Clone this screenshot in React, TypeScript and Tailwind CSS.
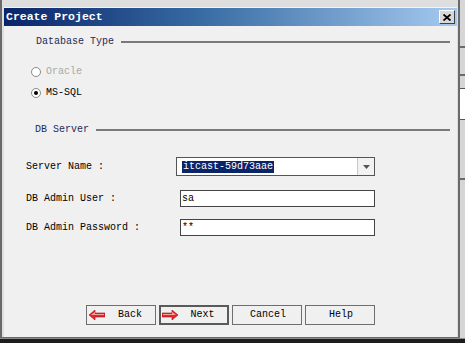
import React from 'react';

const mono = { fontFamily: '"Liberation Mono", "DejaVu Sans Mono", monospace' };

function Arrow({ dir }: { dir: 'left' | 'right' }) {
  return (
    <svg width="16" height="10" viewBox="0 0 16 10" className={dir === 'right' ? '-scale-x-100' : ''}>
      <polygon points="0,5 6,0 6,3 16,3 16,7 6,7 6,10" fill="#e8262b" stroke="#a01010" strokeWidth="0.6" />
      <polygon points="2,5 6,2 6,4 15,4 15,5" fill="#f7a0a0" />
    </svg>
  );
}

function GroupHeader({ label, className }: { label: string; className: string }) {
  return (
    <div className={`flex items-center h-[12px] mr-[7px] gap-[7px] ${className}`}>
      <span className="text-[10px] leading-none text-[#1f2a55]">{label}</span>
      <div className="flex-1 h-[2px] bg-[#7a7a7a]" />
    </div>
  );
}

function Radio({ label, checked, disabled }: { label: string; checked?: boolean; disabled?: boolean }) {
  return (
    <div className="flex items-center h-[14px] gap-[5px]">
      <div className="w-[10px] h-[10px] rounded-full border border-[#8a8a8a] bg-white flex items-center justify-center">
        {checked && <div className="w-[4px] h-[4px] rounded-full bg-black" />}
      </div>
      <span className={`text-[10px] leading-none ${disabled ? 'text-[#a8a8a8]' : 'text-black'}`}>{label}</span>
    </div>
  );
}

function Button({ label, icon, primary }: { label: string; icon?: 'left' | 'right'; primary?: boolean }) {
  return (
    <div
      className={`w-[70px] h-[20px] flex items-center bg-[#f0f0f0] ${
        primary ? 'border-2 border-[#5a5a5a] pl-[1px]' : 'border border-[#6e6e6e] pl-[2px]'
      }`}
    >
      {icon && <Arrow dir={icon} />}
      <span className="flex-1 text-center text-[10px] leading-none text-black">{label}</span>
    </div>
  );
}

export default function App() {
  return (
    <div className="w-[465px] h-[343px] bg-[#1c1c1c] flex flex-col overflow-hidden" style={mono}>
      <div className="flex h-[338px]">
        {/* dialog frame */}
        <div className="w-[460px] h-full flex flex-col bg-[#dedede] border-l-2 border-[#6a6a6a] pl-[2px] pt-[7px] border-r-2 pr-[1px] border-b">
          <div className="h-[1px] bg-[#f4f4f4]" />
          {/* title bar */}
          <div className="h-[18px] flex items-center justify-between bg-[linear-gradient(to_right,#0a246a,#3a6ea5_45%,#a6caf0)] pl-[2px] pr-[2px]">
            <span className="text-white font-bold text-[11.5px] leading-none">Create Project</span>
            <div className="w-[16px] h-[14px] bg-[#d8d8d8] border border-t-white border-l-white border-r-[#404040] border-b-[#404040] flex items-center justify-center">
              <svg width="8" height="7" viewBox="0 0 8 7">
                <path d="M0.5 0.5 L7.5 6.5 M7.5 0.5 L0.5 6.5" stroke="#000" strokeWidth="1.8" />
              </svg>
            </div>
          </div>

          {/* body */}
          <div className="flex-1 flex flex-col bg-[#f0f0f0]">
            <GroupHeader label="Database Type" className="mt-[10px] ml-[32px]" />

            <div className="ml-[27px] mt-[17px] flex flex-col gap-[7px]">
              <Radio label="Oracle" disabled />
              <Radio label="MS-SQL" checked />
            </div>

            <GroupHeader label="DB Server" className="mt-[24px] ml-[31px]" />

            <div className="ml-[22px] mt-[21px] flex flex-col">
              <div className="flex items-center h-[19px]">
                <span className="w-[150px] text-[10px] leading-none text-black">Server Name :</span>
                <div className="w-[199px] h-[19px] flex border border-[#555] bg-white">
                  <div className="flex-1 flex items-center pl-[5px]">
                    <span className="bg-[#0a246a] text-white text-[10px] leading-[12px] px-[1px]">itcast-59d73aae</span>
                  </div>
                  <div className="w-[17px] h-full bg-[#f2f2f2] border-l border-[#c8c8c8] flex items-center justify-center">
                    <svg width="7" height="4" viewBox="0 0 7 4">
                      <polygon points="0,0 7,0 3.5,4" fill="#555" />
                    </svg>
                  </div>
                </div>
              </div>

              <div className="flex items-center h-[17px] mt-[14px]">
                <span className="w-[154px] text-[10px] leading-none text-black">DB Admin User :</span>
                <div className="w-[195px] h-[17px] flex items-center border border-[#444] bg-white pl-[1px]">
                  <span className="text-[10px] leading-none text-black">sa</span>
                </div>
              </div>

              <div className="flex items-center h-[17px] mt-[12px]">
                <span className="w-[154px] text-[10px] leading-none text-black">DB Admin Password :</span>
                <div className="w-[195px] h-[17px] flex items-center border border-[#444] bg-white pl-[1px]">
                  <span className="text-[10px] leading-none text-black">**</span>
                </div>
              </div>
            </div>

            <div className="mt-auto mb-[12px] ml-[82px] flex gap-[3px]">
              <Button label="Back" icon="left" />
              <Button label="Next" icon="right" primary />
              <Button label="Cancel" />
              <Button label="Help" />
            </div>
          </div>
        </div>

        {/* sliver of the window behind */}
        <div className="w-[5px] h-full bg-[#d6d6d6] flex flex-col">
          <div className="h-[46px]" />
          <div className="h-[2px] bg-[#6a6a6a]" />
          <div className="h-[26px]" />
          <div className="h-[2px] bg-[#6a6a6a]" />
          <div className="h-[12px]" />
          <div className="h-[32px] bg-white border-y border-[#555]" />
          <div className="h-[58px]" />
          <div className="h-[2px] bg-[#6a6a6a]" />
        </div>
      </div>
      <div className="h-[1px] bg-[#8a8a8a]" />
    </div>
  );
}
